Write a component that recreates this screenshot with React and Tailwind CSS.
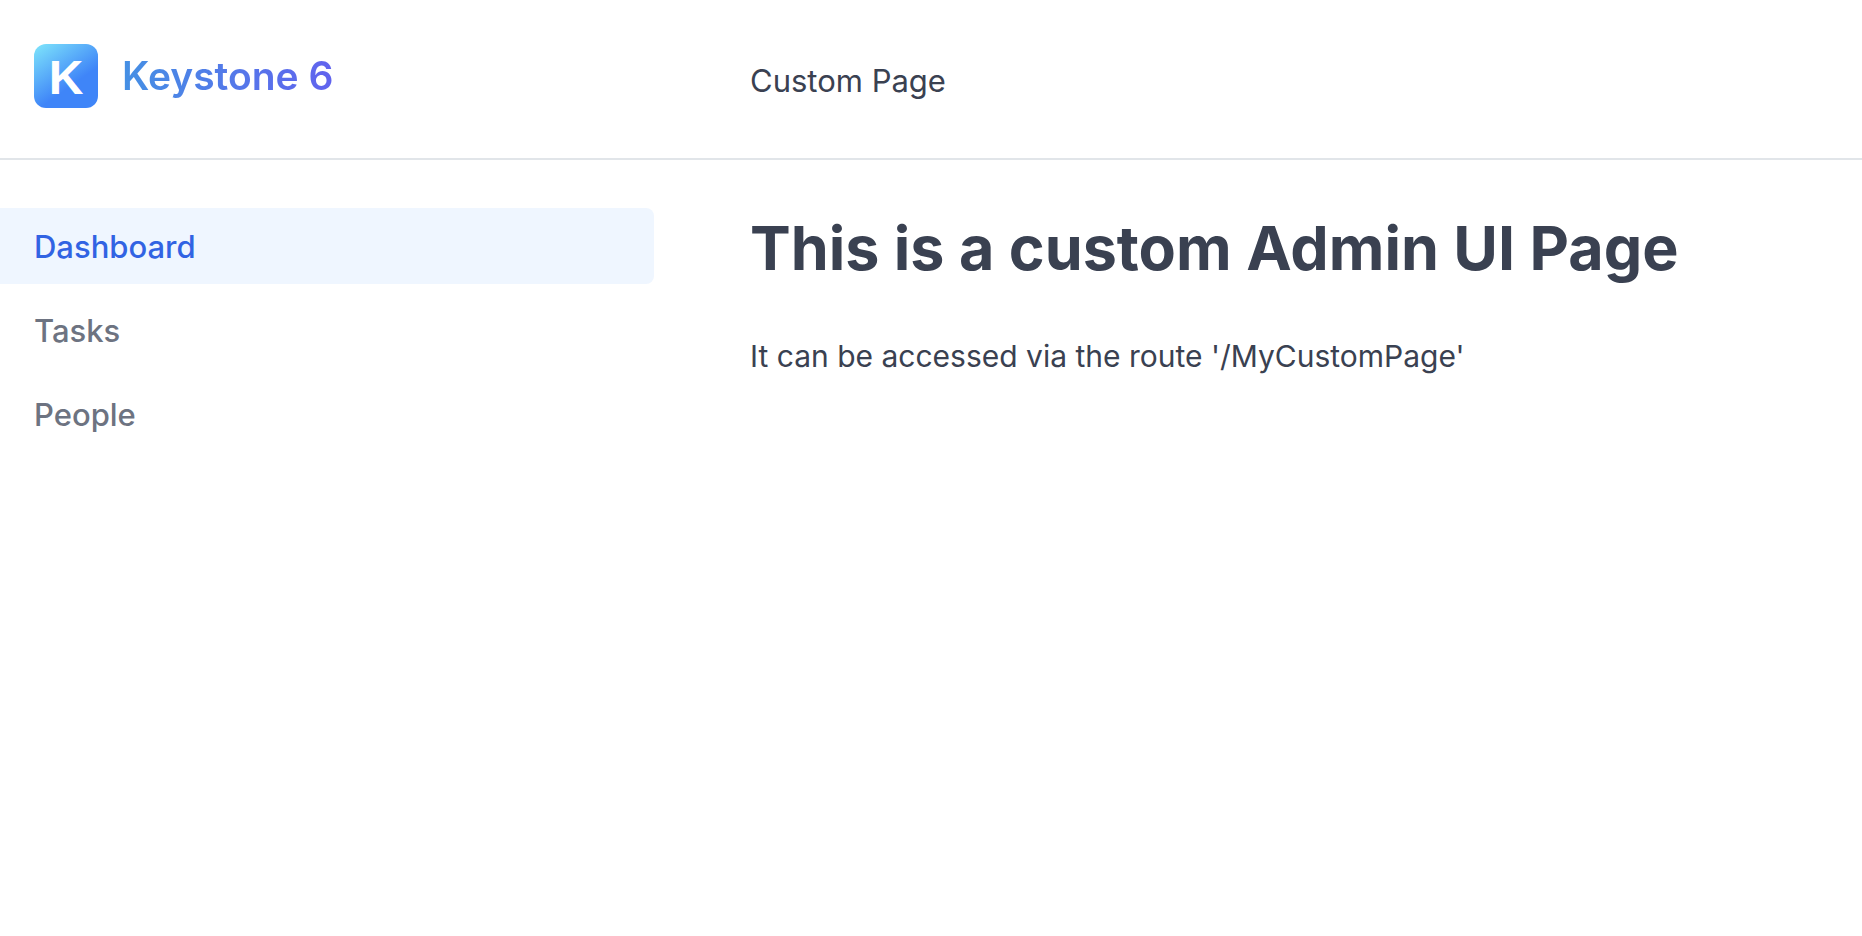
const navItems = [
  { label: 'Dashboard', href: '#dashboard', active: true },
  { label: 'Tasks', href: '#tasks', active: false },
  { label: 'People', href: '#people', active: false },
];

function Logo() {
  return (
    <svg aria-hidden="true" viewBox="0 0 64 64" className="size-16 shrink-0">
      <defs>
        <linearGradient id="logo-fill" x1="0" y1="0" x2="0.5" y2="0.71">
          <stop offset="0" stopColor="#7fe6fb" />
          <stop offset="1" stopColor="#3f85f8" />
        </linearGradient>
      </defs>
      <rect width="64" height="64" rx="12" fill="url(#logo-fill)" />
      <text
        x="32"
        y="50"
        textAnchor="middle"
        className="fill-white font-['Liberation_Sans',sans-serif] text-[48px] font-bold"
      >
        K
      </text>
    </svg>
  );
}

function Header() {
  return (
    <header className="grid h-40 grid-cols-[702px_1fr] border-b-2 border-[#e1e5e9]">
      <div className="flex items-center gap-6 pb-1.5 pl-[34px]">
        <Logo />
        <h3 className="text-[39px] leading-[48px] font-semibold">
          <a
            href="#home"
            className="bg-[linear-gradient(to_right,#4590e4,#6163ee)] bg-clip-text text-transparent"
          >
            Keystone 6
          </a>
        </h3>
      </div>
      <div className="flex items-center px-12 pt-1">
        <h3 className="text-[31px] leading-10">Custom Page</h3>
      </div>
    </header>
  );
}

function Sidebar() {
  return (
    <nav aria-label="Side Navigation" className="pt-12 pr-12">
      <ul className="flex flex-col gap-2">
        {navItems.map((item) => (
          <li key={item.label}>
            <a
              href={item.href}
              aria-current={item.active ? 'location' : undefined}
              className={
                item.active
                  ? 'block rounded-r-lg bg-[#eff6ff] pt-[19px] pb-[17px] pl-[34px] text-[31px] leading-10 font-medium text-[#3163e3]'
                  : 'block rounded-r-lg pt-[19px] pb-[17px] pl-[34px] text-[31px] leading-10 font-medium text-[#6d7381]'
              }
            >
              {item.label}
            </a>
          </li>
        ))}
      </ul>
    </nav>
  );
}

export default function App() {
  return (
    <div className="min-h-screen bg-white font-['Inter',sans-serif] text-[#3a4151]">
      <Header />
      <div className="grid grid-cols-[702px_1fr]">
        <Sidebar />
        <main className="px-12 pt-12">
          <h1 className="text-[61px] leading-[80px] font-bold">This is a custom Admin UI Page</h1>
          <p className="mt-12 text-[30px] leading-10">
            It can be accessed via the route '/MyCustomPage'
          </p>
        </main>
      </div>
    </div>
  );
}
